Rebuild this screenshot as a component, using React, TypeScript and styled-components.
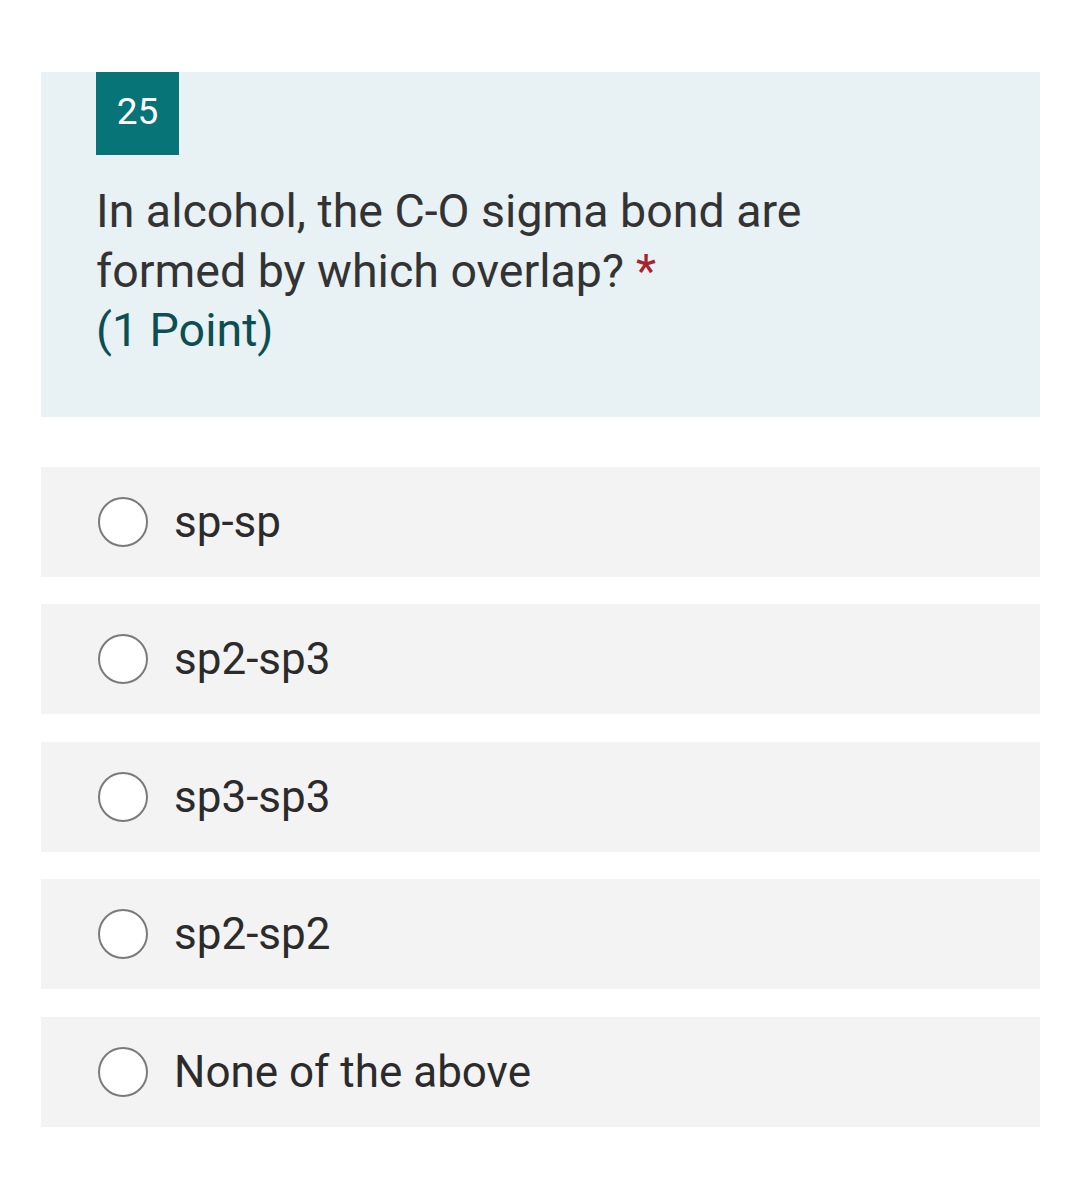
import React from "react";
import styled, { createGlobalStyle } from "styled-components";

const Global = createGlobalStyle`
  html, body { margin: 0; padding: 0; background: #ffffff; }
  body { font-family: Roboto, "Noto Sans", sans-serif; }
`;

const Page = styled.div`
  padding: 72px 27px 60px 41px;
  display: flex;
  flex-direction: column;
`;

const Header = styled.div`
  background: #e8f1f4;
  padding: 0 55px 56px 55px;
  display: flex;
  flex-direction: column;
  align-items: flex-start;
`;

const Badge = styled.div`
  width: 83px;
  height: 83px;
  background: #077478;
  color: #ffffff;
  font-size: 37px;
  padding-bottom: 4px;
  box-sizing: border-box;
  display: flex;
  align-items: center;
  justify-content: center;
`;

const Question = styled.div`
  margin-top: 27px;
  font-size: 46.5px;
  line-height: 59.5px;
  color: #333333;
  max-width: 760px;
`;

const Star = styled.span`
  color: #a4262c;
  margin-left: 12px;
`;

const Points = styled.div`
  color: #0b4f52;
`;

const Options = styled.div`
  margin-top: 50px;
  display: flex;
  flex-direction: column;
  gap: 27.5px;
`;

const Option = styled.label`
  height: 110px;
  background: #f3f3f3;
  display: flex;
  align-items: center;
  padding-left: 57px;
  gap: 26px;
`;

const Radio = styled.span`
  width: 46px;
  height: 46px;
  border-radius: 50%;
  border: 2.5px solid #7a7a7a;
  background: #ffffff;
  flex: none;
`;

const OptionText = styled.span`
  font-size: 44px;
  color: #2b2b2b;
`;

const options = ["sp-sp", "sp2-sp3", "sp3-sp3", "sp2-sp2", "None of the above"];

export default function App() {
  return (
    <>
      <Global />
      <Page>
        <Header>
          <Badge>25</Badge>
          <Question>
            In alcohol, the C-O sigma bond are formed by which overlap?
            <Star>*</Star>
            <Points>(1 Point)</Points>
          </Question>
        </Header>
        <Options>
          {options.map((o) => (
            <Option key={o}>
              <Radio />
              <OptionText>{o}</OptionText>
            </Option>
          ))}
        </Options>
      </Page>
    </>
  );
}
